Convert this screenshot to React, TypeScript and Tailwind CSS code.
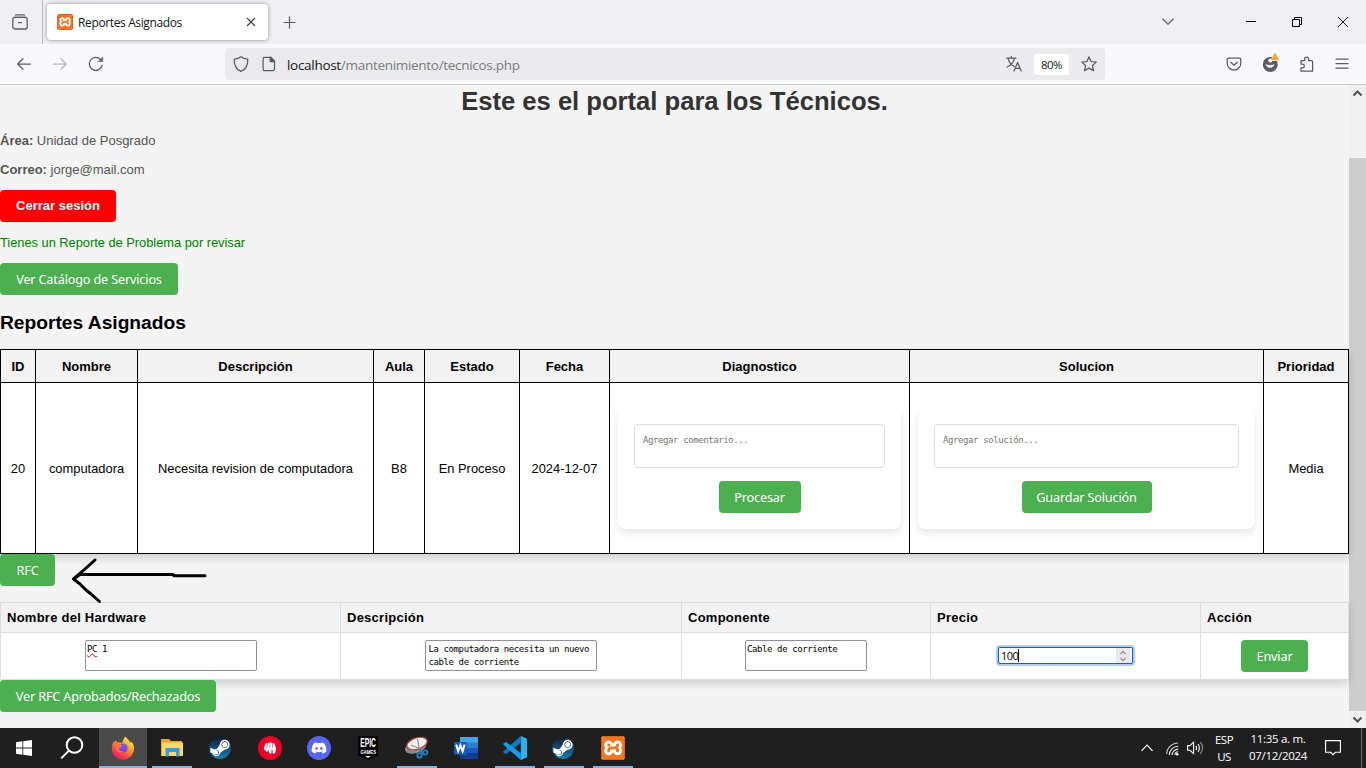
import React from "react";
import { FaSteamSymbol, FaDiscord } from "react-icons/fa";
import { SiXampp } from "react-icons/si";

const UI = "font-['Open_Sans','Noto_Sans',sans-serif]";
const ARIAL = "font-['Liberation_Sans',Arial,sans-serif]";

function Icon({ s = 16, children, className = "" }: { s?: number; children: React.ReactNode; className?: string }) {
  return (
    <svg width={s} height={s} viewBox="0 0 16 16" fill="none" stroke="currentColor" strokeWidth="1.25" strokeLinecap="round" strokeLinejoin="round" className={"shrink-0 " + className}>
      {children}
    </svg>
  );
}

function Xampp({ className }: { className: string }) {
  return (
    <span className={"flex shrink-0 items-center justify-center overflow-hidden rounded-[2px] border border-[#d9621c] bg-white " + className}>
      <SiXampp className="size-full scale-110 text-[#f37623]" />
    </span>
  );
}

function TabBar() {
  return (
    <div className="flex h-[44px] bg-[#f0f0f4] text-[#5b5b66]">
      <div className="flex w-[43px] items-center justify-center border-r border-[#b9b9c0] pr-[2px]">
        <svg width="16" height="16" viewBox="0 0 16 16" fill="none" stroke="#5b5b66" strokeWidth="1.3" strokeLinecap="round">
          <path d="M3.6 0.9H12.4M2.2 3.4H13.8" />
          <rect x="0.8" y="3.4" width="14.4" height="11.6" rx="2" />
          <path d="M6.5 8.6H9.5" />
        </svg>
      </div>
      <div className="ml-1 mt-1 flex h-9 w-[221px] items-center rounded bg-white pl-[10px] pr-3 shadow-[0_0_4px_rgba(0,0,0,0.4)]">
        <Xampp className="size-4" />
        <span className={`ml-[5px] grow whitespace-nowrap pt-[2px] text-[12px] tracking-[-0.37px] text-[#15141a] ${UI}`}>Reportes Asignados</span>
        <svg width="10" height="10" viewBox="0 0 10 10" stroke="#3b3b44" strokeWidth="1.1"><path d="M1 1L9 9M9 1L1 9" /></svg>
      </div>
      <svg className="ml-[15px] mt-4 shrink-0" width="13" height="13" viewBox="0 0 13 13" stroke="#5b5b66" strokeWidth="1.2"><path d="M6.5 0.5V12.5M0.5 6.5H12.5" /></svg>
      <div className="grow" />
      <svg className="mr-[72px] mt-[18px] shrink-0" width="12" height="8" viewBox="0 0 12 8" fill="none" stroke="#5b5b66" strokeWidth="1.2"><path d="M0.5 0.8L6 6.2L11.5 0.8" /></svg>
      <svg className="mr-9 mt-[21px] shrink-0" width="10" height="1"><rect width="10" height="1" fill="#000" /></svg>
      <svg className="mr-9 mt-[17px] shrink-0" width="10" height="10" viewBox="0 0 10 10" fill="none" stroke="#000"><path d="M0.5 2.5H7.5V9.5H0.5ZM2.5 2.5V0.5H9.5V7.5H7.5" /></svg>
      <svg className="mr-[18px] mt-[17px] shrink-0" width="10" height="10" viewBox="0 0 10 10" stroke="#000" strokeWidth="0.9"><path d="M0 0L10 10M10 0L0 10" /></svg>
    </div>
  );
}

function NavBar() {
  return (
    <div className="flex h-[41px] items-center border-b border-[#cccccf] bg-[#f9f9fb] text-[#5b5b66]">
      <div className="flex w-[225px] items-center gap-5 pl-4">
        <Icon><path d="M14.6 8H1.6M7 2.8L1.6 8L7 13.2" /></Icon>
        <Icon className="text-[#b9b9c0]"><path d="M1.4 8H14.4M9 2.8L14.4 8L9 13.2" /></Icon>
        <Icon><path d="M14.2 9.2A6.5 6.5 0 1 1 12.4 3.2" /><path d="M14.7 1.3V5.6H10.4Z" fill="currentColor" strokeWidth="0.6" /></Icon>
      </div>
      <div className="flex h-8 w-[880px] items-center rounded bg-[#ebebed] pl-2 pr-2">
        <Icon><path d="M8 0.8C6 2.4 3.5 3 1.3 3.1C1 8 3 13.2 8 15.3C13 13.2 15 8 14.7 3.1C12.5 3 10 2.4 8 0.8Z" /></Icon>
        <Icon className="ml-3"><path d="M3.7 1.3H9.8L13.5 5V13.1A1.6 1.6 0 0 1 11.9 14.7H3.7A1.6 1.6 0 0 1 2.1 13.1V2.9A1.6 1.6 0 0 1 3.7 1.3Z" /><path d="M9.2 1.3V5.6H13.5Z" fill="currentColor" /></Icon>
        <span className={`ml-[10px] grow whitespace-nowrap pt-[3px] text-[13.5px] tracking-[-0.3px] text-[#7b7b80] ${UI}`}>
          <span className="text-[#15141a]">localhost</span>/mantenimiento/tecnicos.php
        </span>
        <Icon><path d="M0.8 2.2H9.8M5.3 0.6V2.2M2.2 2.6C3 6 6 9.4 8.2 10.4M8.4 2.6C7.6 6.2 4 9.6 1.2 11M8 15L11.6 6.4L15.2 15M9.2 12.4H14" /></Icon>
        <span className={`ml-3 flex h-[21px] w-[35px] items-center justify-center rounded-[3px] bg-white pt-px text-[11.5px] tracking-[-0.5px] text-[#15141a] ${UI}`}>80%</span>
        <Icon className="ml-3"><path d="M8 0.9L10.1 5.5L15.2 6.1L11.4 9.5L12.5 14.6L8 12.1L3.5 14.6L4.6 9.5L0.8 6.1L5.9 5.5Z" /></Icon>
      </div>
      <div className="ml-[121px] flex items-center gap-5">
        <Icon><path d="M2.6 2H13.4A1.4 1.4 0 0 1 14.8 3.4V7.2A6.8 6.8 0 0 1 1.2 7.2V3.4A1.4 1.4 0 0 1 2.6 2Z" /><path d="M4.8 6.2L8 9.2L11.2 6.2" /></Icon>
        <svg width="18" height="22" viewBox="0 0 18 22" className="mx-[-1px] shrink-0">
          <circle cx="9.3" cy="11.4" r="7.5" fill="#5b5b66" />
          <circle cx="9.3" cy="7.6" r="2" fill="#f9f9fb" />
          <path d="M5 11.6C6 15.4 12 15.4 13.2 11.6C11.4 12.8 6.8 12.8 5 11.6Z" fill="#f9f9fb" stroke="#f9f9fb" strokeWidth="0.6" />
          <path d="M14 -1.2L19 8H9.4Z" fill="#f9f9fb" />
          <path d="M13.6 0H14.4L18 6.6L17.6 7.2H10.8L10.4 6.6Z" fill="#ffa436" />
        </svg>
        <Icon className="ml-px"><path d="M2 4.6H5.6V3A2 2 0 0 1 9.6 3V4.6H12.4A1.2 1.2 0 0 1 13.6 5.8V15.2H2V11.8H3.4A1.9 1.9 0 0 0 3.4 8H2Z" /></Icon>
        <Icon className="-ml-px"><path d="M2 3.2H14M2 7.7H14M2 12.2H14" /></Icon>
      </div>
    </div>
  );
}

function Btn({ children, className = "" }: { children: React.ReactNode; className?: string }) {
  return (
    <button className={`flex h-8 shrink-0 items-center justify-center whitespace-nowrap rounded bg-[#4caf50] pt-px text-[12.7px] tracking-[-0.18px] text-white font-['Noto_Sans',sans-serif] ${className}`}>
      {children}
    </button>
  );
}

const MONO = "font-['DejaVu_Sans_Mono',monospace] text-[9px] leading-[13px] tracking-[-0.4px]";

function Cell({ children, head = false }: { children: React.ReactNode; head?: boolean }) {
  return (
    <div className={`flex items-center justify-center whitespace-nowrap border-b border-r border-black ${head ? "bg-[#f2f2f2] text-[13px] font-bold" : "bg-white"}`}>
      {children}
    </div>
  );
}

function FormCard({ hint, action, width }: { hint: string; action: string; width: string }) {
  return (
    <div className="mx-2 flex h-[121px] grow flex-col items-center rounded-lg bg-white p-4 shadow-[0_4px_8px_rgba(0,0,0,0.1)]">
      <div className={`h-11 w-full shrink-0 rounded border border-[#dddddd] px-2 py-[9px] text-[#757575] ${MONO}`}>{hint}</div>
      <Btn className={"mt-[13px] " + width}>{action}</Btn>
    </div>
  );
}

function HardCell({ children }: { children: React.ReactNode }) {
  return <div className="flex items-start justify-center border-b border-r border-[#dddddd] bg-white pt-[7px]">{children}</div>;
}

function Area({ children, className }: { children: React.ReactNode; className: string }) {
  return <div className={`h-[31px] whitespace-pre rounded-[2px] border border-[#8f8f9d] bg-white pt-[2px] text-black ${MONO} ${className}`}>{children}</div>;
}

function Page() {
  const heads = ["ID", "Nombre", "Descripción", "Aula", "Estado", "Fecha", "Diagnostico", "Solucion", "Prioridad"];
  const hw = ["Nombre del Hardware", "Descripción", "Componente", "Precio", "Acción"];
  return (
    <div className={`relative flex w-[1349px] flex-col items-start bg-[#f4f4f4] text-[12.9px] leading-[19px] text-black ${ARIAL}`}>
      <h1 className="w-full text-center text-[25.6px] font-bold leading-[33px] text-[#333]">Este es el portal para los Técnicos.</h1>
      <p className="mt-[13px] text-[13px] text-[#555]"><b>Área:</b> Unidad de Posgrado</p>
      <p className="mt-[10px] text-[13px] text-[#555]"><b>Correo:</b> jorge@mail.com</p>
      <button className="mt-[11px] h-8 w-[116px] rounded bg-[#ff0000] pb-[2px] text-[13px] font-bold text-white">Cerrar sesión</button>
      <p className="mt-[11px] tracking-[-0.04px] text-[#008000]">Tienes un Reporte de Problema por revisar</p>
      <Btn className="mt-[11px] w-[178px]">Ver Catálogo de Servicios</Btn>
      <h2 className="mt-[15px] pt-px text-[19.2px] font-bold leading-[23px]">Reportes Asignados</h2>
      <div className="mt-[15px] grid grid-cols-[35px_102px_236px_51px_95px_90px_300px_354px_85px] grid-rows-[33px_171px] border-l border-t border-black shadow-[0_4px_8px_rgba(0,0,0,0.15)]">
        {heads.map((h) => <Cell key={h} head>{h}</Cell>)}
        <Cell>20</Cell>
        <Cell>computadora</Cell>
        <Cell>Necesita revision de computadora</Cell>
        <Cell>B8</Cell>
        <Cell>En Proceso</Cell>
        <Cell>2024-12-07</Cell>
        <Cell><FormCard hint="Agregar comentario..." action="Procesar" width="w-[82px]" /></Cell>
        <Cell><FormCard hint="Agregar solución..." action="Guardar Solución" width="w-[130px]" /></Cell>
        <Cell>Media</Cell>
      </div>
      <Btn className="relative w-[55px]">RFC</Btn>
      <div className="mt-4 grid grid-cols-[340px_341px_249px_270px_148px] grid-rows-[30px_47px] rounded-b border-l border-t border-[#dddddd] shadow-[0_4px_8px_rgba(0,0,0,0.15)]">
        {hw.map((h) => (
          <div key={h} className="flex items-center whitespace-nowrap border-b border-r border-[#dddddd] bg-[#f2f2f2] pl-[6px] text-[13px] font-bold tracking-[0.25px]">{h}</div>
        ))}
        <HardCell><Area className="w-[172px] pl-[1.5px]"><span className="underline decoration-[#e00000] decoration-wavy decoration-1 underline-offset-1">PC</span> 1</Area></HardCell>
        <HardCell><Area className="w-[172px] pl-[2.5px]">{"La computadora necesita un nuevo\ncable de corriente"}</Area></HardCell>
        <HardCell><Area className="w-[122px] pl-px">Cable de corriente</Area></HardCell>
        <HardCell>
          <div className={`mt-[7px] flex h-[17px] w-[135px] items-center rounded-[2px] border border-[#0060df] bg-white pl-[2px] text-[11px] tracking-[-0.5px] shadow-[0_0_0_2px_#b3cdf3] ${UI}`}>
            <span>100</span>
            <span className="h-[13px] w-px bg-black" />
            <span className="grow" />
            <span className="mr-[2px] flex h-[15px] w-[14px] items-center justify-center bg-[#e9e9ed]">
              <svg width="8" height="12" viewBox="0 0 8 12" fill="none" stroke="#9a9aa4" strokeWidth="1.5"><path d="M1.5 4L4 1.5L6.5 4M1.5 8L4 10.5L6.5 8" /></svg>
            </span>
          </div>
        </HardCell>
        <HardCell><Btn className="w-[67px]">Enviar</Btn></HardCell>
      </div>
      <Btn className="relative w-[216px]">Ver RFC Aprobados/Rechazados</Btn>
      <svg className="absolute left-[70px] top-[470px]" width="140" height="50" viewBox="70 555 140 50" fill="none" stroke="#000" strokeWidth="3" strokeLinecap="round" strokeLinejoin="round">
        <path d="M95 560L85 569L73.5 579L80 584L86 590L91 594L99.5 601.5M75 578L80 574.5H173L174 575.7H205" />
      </svg>
    </div>
  );
}

function Steam() {
  return (
    <span className="-ml-[2px] flex size-[22px] items-center justify-center overflow-hidden rounded-full bg-linear-to-b from-[#101c3c] to-[#1180b0]">
      <FaSteamSymbol className="size-[22px] text-white" />
    </span>
  );
}

function Firefox() {
  return (
    <svg width="24" height="24" viewBox="0 0 24 24">
      <defs>
        <linearGradient id="ff" x1="0.85" y1="0.1" x2="0.25" y2="1"><stop offset="0" stopColor="#fff04a" /><stop offset="0.4" stopColor="#ff9328" /><stop offset="0.75" stopColor="#ff3a50" /><stop offset="1" stopColor="#e31587" /></linearGradient>
        <linearGradient id="fp" x1="0.8" y1="0" x2="0.2" y2="1"><stop offset="0" stopColor="#5b6df8" /><stop offset="1" stopColor="#9a2ccf" /></linearGradient>
      </defs>
      <path d="M14.6 0.5C16 3.2 18.7 4 19 7L20.2 5.6C22.4 8 23.3 10.2 23 13.4C22.3 19.4 17.6 23.6 12 23.6C5.6 23.6 0.8 18.8 0.8 12.8C0.8 10 1.3 7.4 3 5L3.4 6.7L4.6 4L6 6.4C8 6.1 9.5 6.5 11 7.4C11.6 4.6 12.7 2.3 14.6 0.5Z" fill="url(#ff)" />
      <circle cx="12.1" cy="12" r="4.6" fill="url(#fp)" />
      <path d="M3.8 8.2C6.3 7.3 9 7.8 11.2 9.7C10.1 11.3 8.2 10.8 8 12.8C8.2 14.8 10.4 15.5 12.4 14.7C10 18.3 5 16.5 4.8 12Z" fill="#ff7139" />
    </svg>
  );
}

function Task({ children, running = false, active = false }: { children?: React.ReactNode; running?: boolean; active?: boolean }) {
  return (
    <div className={`flex h-10 flex-col items-center ${active ? "w-12 bg-[#4a4a4a]" : "w-10"}`}>
      <div className="flex h-[38px] items-center pt-[2px]">{children}</div>
      {running && <div className="h-[2px] w-full bg-[#76b9ed]" />}
    </div>
  );
}

function TaskBar() {
  return (
    <div className="flex h-10 bg-[#1f1f1f] text-white">
      <div className="flex w-[99px] items-center pl-4">
        <svg width="16" height="16" viewBox="0 0 16 16" fill="#fff" className="shrink-0"><path d="M0 2.2L6.4 1.3V7.6H0ZM7.2 1.2L16 0V7.6H7.2ZM0 8.4H6.4V14.7L0 13.8ZM7.2 8.4H16V16L7.2 14.8Z" /></svg>
        <svg className="ml-[28px] shrink-0" width="24" height="24" viewBox="0 0 24 24" fill="none" stroke="#fff" strokeWidth="2"><circle cx="14.5" cy="9" r="7.8" /><path d="M9 14.6L1.2 22.4" /></svg>
      </div>
      <div className="flex gap-[9px]">
        <div className="-mr-1"><Task active running><Firefox /></Task></div>
        <Task running>
          <svg width="22" height="20" viewBox="0 0 22 20"><path d="M0 1H8L10 3H21V18H0Z" fill="#e5a91b" /><path d="M1 4.5H22V18H1Z" fill="#ffd86b" /><path d="M4.5 18.5V10H18.5V18.5H15V14H8V18.5Z" fill="#3f98dc" /></svg>
        </Task>
        <Task><Steam /></Task>
        <Task>
          <span className="flex size-6 items-center justify-center rounded-full bg-[#ed0028]">
            <svg width="14" height="14" viewBox="0 0 14 14" fill="#fff">
              <path d="M2.4 2.6L4.2 2L3.6 7H1ZM4.7 1.9L6.7 1.6V7H4.1ZM7.1 1.6L9 1.8L9.6 7H7.1ZM9.5 2L11.4 2.6L13.2 7.6L12 12.6H9.6V9.2L8.6 8.2V12.6H6.4L5.6 9.4H4.6L4.4 11.2L0.8 8L1 7H10Z" />
            </svg>
          </span>
        </Task>
        <Task><span className="flex size-6 items-center justify-center rounded-full bg-[#5865f2]"><FaDiscord className="size-4" /></span></Task>
        <Task>
          <span className="relative block h-6 w-5 overflow-hidden bg-[#060606] [clip-path:polygon(0_0,100%_0,100%_82%,50%_100%,0_82%)]">
            <span className="absolute left-[-10px] top-0 w-10 text-center font-['Liberation_Sans',sans-serif] text-[12px] font-bold leading-[14px]"><span className="inline-block origin-center scale-x-[0.56]">EPIC</span></span>
            <span className="absolute left-[-10px] top-[13px] w-10 text-center text-[5px] font-bold leading-[6px] font-['Liberation_Sans',sans-serif]"><span className="inline-block scale-x-[0.85]">GAMES</span></span>
            <svg className="absolute left-[7px] top-[20px]" width="6" height="3"><path d="M0 0H6L3 2Z" fill="#fff" /></svg>
          </span>
        </Task>
        <Task running>
          <svg width="24" height="24" viewBox="0 0 24 24" fill="none">
            <ellipse cx="11" cy="11" rx="11" ry="6" transform="rotate(-18 11 12)" fill="#8b8b8d" />
            <ellipse cx="12" cy="7.5" rx="10.5" ry="5.6" transform="rotate(-18 12 7.5)" fill="#f4f4f4" stroke="#c5373b" strokeWidth="1.2" />
            <path d="M12.5 3L14.5 14M6 9L17 14" stroke="#8e9297" strokeWidth="1.3" />
            <circle cx="14.5" cy="19.5" r="2.3" stroke="#1785c9" strokeWidth="1.8" /><circle cx="20.3" cy="16.5" r="2.1" stroke="#1785c9" strokeWidth="1.8" /><path d="M14.5 13L17.5 17.5" stroke="#1785c9" strokeWidth="2" />
          </svg>
        </Task>
        <Task>
          <svg width="24" height="22" viewBox="0 0 24 22">
            <path d="M6 0H24V6H6Z" fill="#41a5ee" /><path d="M6 5.5H24V11H6Z" fill="#2b7cd3" /><path d="M6 11H24V16.5H6Z" fill="#185abd" /><path d="M6 16.5H24V22H6Z" fill="#103f91" />
            <rect y="5" width="13" height="12.5" rx="1" fill="#185abd" />
            <path d="M2.2 7.6L4.2 14.2L6.4 8.4L8.6 14.2L10.6 7.6" fill="none" stroke="#fff" strokeWidth="2" />
          </svg>
        </Task>
        <Task running>
          <svg width="24" height="24" viewBox="0 0 24 24">
            <path d="M17.8 0L24 2.7V21.3L17.8 24Z" fill="#29b0f5" />
            <path d="M17.8 0V6.7L3 18.2L0.4 16.4V15.3Z" fill="#0b77bd" />
            <path d="M17.8 24V17.3L3 5.8L0.4 7.6V8.7Z" fill="#159be4" />
          </svg>
        </Task>
        <Task running><Steam /></Task>
        <Task running><Xampp className="size-6" /></Task>
      </div>
      <div className="grow" />
      <svg className="mr-[13px] mt-4 shrink-0" width="12" height="8" viewBox="0 0 12 8" fill="none" stroke="#fff" strokeWidth="1.2"><path d="M0.5 6.8L6 1.2L11.5 6.8" /></svg>
      <svg className="mr-[7px] mt-[14px] shrink-0" width="14" height="14" viewBox="0 0 14 14" fill="none" stroke="#e8e8e8" strokeWidth="1.1">
        <path d="M0.7 12A11.3 11.3 0 0 1 12 1" opacity="0.8" /><path d="M3.4 13A8.8 8.8 0 0 1 12.2 4.2M6.2 13A6 6 0 0 1 12.2 7.1M9 13A3.2 3.2 0 0 1 12.2 9.8" /><circle cx="11.2" cy="12.2" r="1.3" fill="#fff" stroke="none" />
      </svg>
      <svg className="mr-[9px] mt-[13px] shrink-0" width="17" height="14" viewBox="0 0 17 14" fill="none" stroke="#fff" strokeWidth="1.1">
        <path d="M0.6 4.6H3L6.6 1.2V12.6L3 9.3H0.6ZM8.8 4.8C9.7 6 9.7 8 8.8 9.2M11 3C12.8 5 12.8 9 11 11" /><path d="M13.3 1.2C16.2 4.2 16.2 9.8 13.3 12.8" opacity="0.5" />
      </svg>
      <div className={`flex w-[22px] flex-col items-center pt-[3px] text-[11.5px] leading-[17px] tracking-[-0.5px] ${UI}`}><span>ESP</span><span>US</span></div>
      <div className={`ml-[10px] flex w-[66px] flex-col items-center whitespace-nowrap pt-[2px] text-[11.5px] leading-[17px] tracking-[-0.3px] ${UI}`}><span>11:35 a. m.</span><span>07/12/2024</span></div>
      <svg className="ml-[14px] mr-5 mt-3 shrink-0" width="16" height="16" viewBox="0 0 17 17" fill="none" stroke="#fff" strokeWidth="1.2"><path d="M0.6 0.6H16.4V13H11L8.5 15.6L6 13H0.6Z" /></svg>
      <div className="mr-1 w-px bg-[#6a6a6a]" />
    </div>
  );
}

export default function App() {
  return (
    <div className="flex h-[768px] w-[1366px] flex-col overflow-hidden">
      <TabBar />
      <NavBar />
      <div className="flex h-[643px]">
        <Page />
        <div className="flex w-[17px] flex-col items-center bg-[#f0f0f0]">
          <svg width="17" height="73" fill="none" stroke="#505050" strokeWidth="2"><path d="M4.5 10.5L8.5 6.5L12.5 10.5" /></svg>
          <div className="h-[553px] w-full bg-[#cdcdcd]" />
          <svg width="17" height="17" fill="none" stroke="#505050" strokeWidth="2"><path d="M4.5 6.5L8.5 10.5L12.5 6.5" /></svg>
        </div>
      </div>
      <TaskBar />
    </div>
  );
}
